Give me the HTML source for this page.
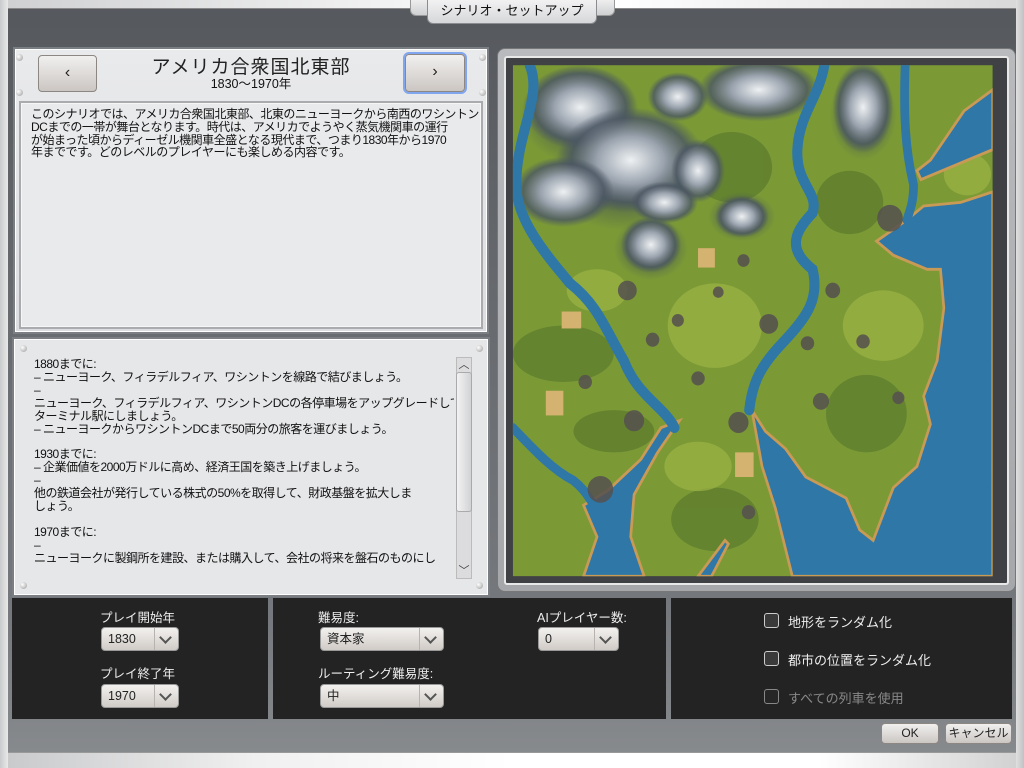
<!DOCTYPE html>
<html><head><meta charset="utf-8"><style>
*{margin:0;padding:0;box-sizing:border-box}
body{width:1024px;height:768px;overflow:hidden;position:relative;font-family:"Liberation Sans","Noto Sans CJK JP",sans-serif;background:linear-gradient(180deg,#55585d 0%,#676a6e 40%,#75787c 80%,#898c8f 100%)}
.abs{position:absolute}
.topband{left:0;top:0;width:1024px;height:9px;background:linear-gradient(90deg,#cfd0d2,#f4f4f4 40%,#fff 60%,#d8d8d8);border-bottom:1px solid #888}
.botband{left:0;top:752px;width:1024px;height:16px;background:linear-gradient(90deg,#c8c9cb,#f0f0f0 25%,#fff 50%,#fff 80%,#d0d0d0);border-top:1px solid #999}
.lside{left:0;top:0;width:8px;height:768px;background:linear-gradient(90deg,#c9cacc,#e9e9e9)}
.rside{left:1016px;top:0;width:8px;height:768px;background:linear-gradient(90deg,#e0e0e0,#c0c1c3)}
.tab{left:427px;top:0;width:170px;height:24px;background:linear-gradient(#f2f2f3,#d6d7d9);border:1px solid #8a8c90;border-top:none;border-radius:0 0 6px 6px;font-size:13px;text-align:center;line-height:22px;color:#111}
.tabw{left:410px;top:0;width:205px;height:16px;background:linear-gradient(#eee,#cfd0d2);border-radius:0 0 6px 6px;border:1px solid #999;border-top:none}
.panel{background:linear-gradient(180deg,#e9eaec,#dcdde0);border:1px solid #fff;box-shadow:0 0 0 2px #7b7e82}
.inner{background:#e9eaec;border:2px solid #a9abae;box-shadow:inset 0 0 0 1px #f6f6f6}
.btn{background:linear-gradient(#f1f0ef,#cbc6c2);border:1px solid #8d8783;border-radius:4px;text-align:center;color:#222}
.txt{font-size:12px;line-height:12.8px;color:#111;letter-spacing:-0.5px;white-space:nowrap}
.dark{background:#232324}
.lbl{font-size:12.5px;color:#eee}
.sel{height:24px;background:linear-gradient(#f3f1ef,#d0cbc6);border-radius:4px;border:1px solid #999;font-size:12.5px;color:#222;line-height:22px;padding-left:6px}
.sel .ar{position:absolute;right:0;top:0;width:24px;height:22px;border-left:1px solid #b8b3ae}
.sel .ar:after{content:"";position:absolute;left:6px;top:5px;width:7px;height:7px;border-right:2px solid #555;border-bottom:2px solid #555;transform:rotate(45deg)}
.cb{width:15px;height:15px;border:1.5px solid #ccc;border-radius:3px;background:#3a3a3b}
.rivet{width:7px;height:7px;border-radius:50%;background:radial-gradient(circle at 35% 35%,#fff,#999)}
</style></head><body>
<div class="abs topband"></div>
<div class="abs botband"></div>
<div class="abs lside"></div>
<div class="abs rside"></div>
<div class="abs tabw"></div>
<div class="abs tab">シナリオ・セットアップ</div>

<div class="abs panel" style="left:15px;top:49px;width:472px;height:283px"></div>
<div class="abs rivet" style="left:16px;top:54px"></div><div class="abs rivet" style="left:16px;top:89px"></div>
<div class="abs rivet" style="left:479px;top:54px"></div><div class="abs rivet" style="left:479px;top:89px"></div>
<div class="abs btn" style="left:38px;top:55px;width:59px;height:37px;font-size:16px;line-height:34px">‹</div>
<div class="abs btn" style="left:405px;top:54px;width:60px;height:38px;font-size:16px;line-height:34px;box-shadow:0 0 0 2px #7fa6ef">›</div>
<div class="abs" style="left:120px;top:52px;width:262px;text-align:center;font-size:19px;color:#222;letter-spacing:1px">アメリカ合衆国北東部</div>
<div class="abs" style="left:120px;top:73px;width:262px;text-align:center;font-size:12.5px;color:#111">1830〜1970年</div>
<div class="abs inner" style="left:19px;top:101px;width:464px;height:228px"></div>
<div class="abs txt" style="left:31px;top:108px">このシナリオでは、アメリカ合衆国北東部、北東のニューヨークから南西のワシントン<br>DCまでの一帯が舞台となります。時代は、アメリカでようやく蒸気機関車の運行<br>が始まった頃からディーゼル機関車全盛となる現代まで、つまり1830年から1970<br>年までです。どのレベルのプレイヤーにも楽しめる内容です。</div>

<div class="abs panel" style="left:14px;top:339px;width:474px;height:256px;background:#e6e7e9"></div>
<div class="abs rivet" style="left:20px;top:345px"></div><div class="abs rivet" style="left:476px;top:345px"></div>
<div class="abs rivet" style="left:20px;top:582px"></div><div class="abs rivet" style="left:476px;top:582px"></div>
<div class="abs txt" style="left:34px;top:358px;width:420px;height:220px;overflow:hidden;font-size:12px;line-height:12.9px;letter-spacing:-0.5px">1880までに:<br>– ニューヨーク、フィラデルフィア、ワシントンを線路で結びましょう。<br>–<br>ニューヨーク、フィラデルフィア、ワシントンDCの各停車場をアップグレードして、<br>ターミナル駅にしましょう。<br>– ニューヨークからワシントンDCまで50両分の旅客を運びましょう。<br><br>1930までに:<br>– 企業価値を2000万ドルに高め、経済王国を築き上げましょう。<br>–<br>他の鉄道会社が発行している株式の50%を取得して、財政基盤を拡大しま<br>しょう。<br><br>1970までに:<br>–<br>ニューヨークに製鋼所を建設、または購入して、会社の将来を盤石のものにし</div>
<div class="abs" style="left:456px;top:357px;width:16px;height:222px;background:#dcdcde;border:1px solid #bbb"></div>
<div class="abs" style="left:456px;top:372px;width:16px;height:140px;background:linear-gradient(90deg,#f2f2f3,#d2d3d5);border:1px solid #aaa;border-radius:3px"></div>
<div class="abs" style="left:456px;top:356px;width:16px;height:16px;font-size:11px;text-align:center;color:#444">︿</div>
<div class="abs" style="left:456px;top:562px;width:16px;height:16px;font-size:11px;text-align:center;color:#444">﹀</div>

<div class="abs" style="left:497px;top:48px;width:519px;height:544px;background:linear-gradient(#b9babd,#a5a7aa);border-radius:8px;border:1px solid #777"></div>
<div class="abs" style="left:504px;top:56px;width:505px;height:529px;background:#3f4145;border:2px solid #e8e8e8;border-radius:3px"></div>
<svg class="abs" style="left:496px;top:44px" width="528" height="552" viewBox="0 0 1568 1568" preserveAspectRatio="none">
<defs><clipPath id="c"><rect x="50" y="60" width="1425" height="1452"/></clipPath>
<radialGradient id="m"><stop offset="0" stop-color="#eef1f3"/><stop offset=".45" stop-color="#9aa3ae"/><stop offset=".8" stop-color="#4b5663" stop-opacity=".8"/><stop offset="1" stop-color="#4b5663" stop-opacity="0"/></radialGradient>
<radialGradient id="d"><stop offset="0" stop-color="#3c4756"/><stop offset="1" stop-color="#3c4756" stop-opacity="0"/></radialGradient></defs>
<g clip-path="url(#c)">
<rect x="50" y="60" width="1425" height="1452" fill="#7b9a36"/>
<g fill="#5d7a2d" opacity=".7"><ellipse cx="200" cy="880" rx="150" ry="80"/><ellipse cx="350" cy="1100" rx="120" ry="60"/><ellipse cx="700" cy="350" rx="120" ry="100"/><ellipse cx="1100" cy="1050" rx="120" ry="110"/><ellipse cx="650" cy="1350" rx="130" ry="90"/><ellipse cx="1050" cy="450" rx="100" ry="90"/></g>
<g fill="#9cb445" opacity=".7"><ellipse cx="650" cy="800" rx="140" ry="120"/><ellipse cx="1150" cy="800" rx="120" ry="100"/><ellipse cx="300" cy="700" rx="90" ry="60"/><ellipse cx="1400" cy="370" rx="70" ry="60"/><ellipse cx="600" cy="1200" rx="100" ry="70"/></g>
<g fill="url(#d)"><ellipse cx="250" cy="200" rx="180" ry="140"/><ellipse cx="380" cy="380" rx="230" ry="150"/><ellipse cx="460" cy="580" rx="110" ry="90"/><ellipse cx="730" cy="490" rx="100" ry="70"/><ellipse cx="1090" cy="200" rx="100" ry="130"/></g>
<g fill="url(#m)"><ellipse cx="250" cy="180" rx="170" ry="120"/><ellipse cx="400" cy="330" rx="220" ry="150"/><ellipse cx="200" cy="420" rx="150" ry="100"/><ellipse cx="780" cy="130" rx="180" ry="90"/><ellipse cx="540" cy="150" rx="90" ry="70"/><ellipse cx="460" cy="570" rx="90" ry="80"/><ellipse cx="730" cy="490" rx="80" ry="60"/><ellipse cx="1090" cy="180" rx="90" ry="130"/><ellipse cx="600" cy="360" rx="80" ry="90"/><ellipse cx="500" cy="450" rx="100" ry="60"/></g>
<g fill="#2f77a6" stroke="#c99a55" stroke-width="8">
<polygon points="1475,420 1380,450 1270,460 1220,500 1130,560 1180,600 1280,640 1320,640 1330,750 1310,900 1270,1000 1290,1080 1250,1200 1180,1260 1120,1410 1080,1380 1040,1290 920,1230 860,1150 800,1100 760,1040 790,1200 830,1320 880,1512 1475,1512"/>
<polygon points="1475,130 1390,190 1340,260 1290,330 1250,360 1262,385 1475,300"/>
<polygon points="545,1070 480,1160 410,1280 400,1400 440,1512 260,1512 300,1400 260,1310 330,1270 430,1180 490,1090"/>
<polygon points="600,1512 680,1410 690,1420 640,1512"/>
</g>
<g fill="none" stroke="#2f77a6" stroke-linecap="round">
<path d="M975,60 C960,150 900,200 895,300 C890,400 960,420 940,480 C890,530 860,580 940,640 C960,720 930,770 850,850 C780,920 760,970 752,1040" stroke-width="30"/>
<path d="M100,60 C140,150 60,250 60,400 C60,500 150,600 220,680 C300,740 320,800 380,900 C420,1000 500,1030 530,1090" stroke-width="30"/>
<path d="M1215,60 C1210,200 1215,300 1240,400 C1240,450 1230,470 1220,500" stroke-width="26"/>
<path d="M50,1090 C120,1160 170,1210 230,1240 C270,1270 280,1300 300,1320" stroke-width="26"/>
</g>
<g fill="#55504f" opacity=".85"><circle cx="390" cy="700" r="28"/><circle cx="1170" cy="495" r="38"/><circle cx="810" cy="795" r="28"/><circle cx="410" cy="1070" r="30"/><circle cx="310" cy="1265" r="38"/><circle cx="720" cy="1075" r="30"/><circle cx="1000" cy="700" r="22"/><circle cx="925" cy="850" r="20"/><circle cx="600" cy="950" r="20"/><circle cx="465" cy="840" r="20"/><circle cx="265" cy="960" r="20"/><circle cx="735" cy="615" r="18"/><circle cx="540" cy="785" r="18"/><circle cx="660" cy="705" r="16"/><circle cx="1195" cy="1005" r="18"/><circle cx="1090" cy="845" r="20"/><circle cx="965" cy="1015" r="24"/><circle cx="750" cy="1330" r="20"/></g>
<g fill="#d4b370"><rect x="600" y="580" width="50" height="55"/><rect x="195" y="760" width="58" height="48"/><rect x="148" y="985" width="52" height="70"/><rect x="710" y="1160" width="55" height="70"/></g>
</g></svg>

<div class="abs dark" style="left:12px;top:598px;width:256px;height:121px"></div>
<div class="abs dark" style="left:273px;top:598px;width:393px;height:121px"></div>
<div class="abs dark" style="left:671px;top:598px;width:341px;height:121px"></div>
<div class="abs lbl" style="left:100px;top:607px">プレイ開始年</div>
<div class="abs sel" style="left:101px;top:627px;width:78px">1830<span class="ar"></span></div>
<div class="abs lbl" style="left:100px;top:663px">プレイ終了年</div>
<div class="abs sel" style="left:101px;top:684px;width:78px">1970<span class="ar"></span></div>
<div class="abs lbl" style="left:318px;top:607px">難易度:</div>
<div class="abs sel" style="left:320px;top:627px;width:124px">資本家<span class="ar"></span></div>
<div class="abs lbl" style="left:318px;top:663px">ルーティング難易度:</div>
<div class="abs sel" style="left:320px;top:684px;width:124px">中<span class="ar"></span></div>
<div class="abs lbl" style="left:537px;top:607px">AIプレイヤー数:</div>
<div class="abs sel" style="left:538px;top:627px;width:81px">0<span class="ar"></span></div>
<div class="abs cb" style="left:764px;top:613px"></div><div class="abs lbl" style="left:788px;top:612px;font-size:13px">地形をランダム化</div>
<div class="abs cb" style="left:764px;top:651px"></div><div class="abs lbl" style="left:788px;top:650px;font-size:13px">都市の位置をランダム化</div>
<div class="abs cb" style="left:764px;top:689px;border-color:#888;background:#262627"></div><div class="abs lbl" style="left:788px;top:688px;font-size:13px;color:#888">すべての列車を使用</div>

<div class="abs btn" style="left:881px;top:723px;width:58px;height:21px;font-size:12px;line-height:19px">OK</div>
<div class="abs btn" style="left:945px;top:723px;width:67px;height:21px;font-size:12px;line-height:19px">キャンセル</div>
</body></html>
